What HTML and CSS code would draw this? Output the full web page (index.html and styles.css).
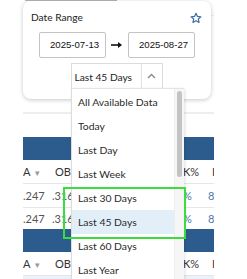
FILE: index.html
```html
<!DOCTYPE html>
<html lang="en">
<head>
  <meta charset="UTF-8" />
  <title>Date Range</title>
  <link rel="stylesheet" href="styles.css">
</head>
<body>
  <div class="page">
    <div class="tab-edge"></div>
    <div class="top-line"></div>
    <div class="divider"></div>

    <div class="group-bar"></div>
    <div class="row head">
      <span class="c1">A <i class="sort">&#9662;</i></span>
      <span class="c2">OBP</span>
      <span class="c3">K%</span>
      <span class="c4">I</span>
    </div>
    <div class="row">
      <span class="c1">.247</span>
      <span class="c2">.316</span>
      <span class="c3 link">%</span>
      <span class="c4 link">8</span>
    </div>
    <div class="row last">
      <span class="c1">.247</span>
      <span class="c2">.316</span>
      <span class="c3 link">%</span>
      <span class="c4 link">8</span>
    </div>

    <div class="group-bar"></div>
    <div class="row head">
      <span class="c1">A <i class="sort">&#9662;</i></span>
      <span class="c2">OBP</span>
      <span class="c3">K%</span>
      <span class="c4">I</span>
    </div>
    <div class="row tinted"></div>
  </div>

  <div class="popover">
    <div class="pop-head">
      <span>Date Range</span>
      <svg class="star" width="12" height="12" viewBox="0 0 24 24">
        <path d="M12 2.5l2.9 6.3 6.8.7-5.1 4.6 1.5 6.7L12 17.4l-6.1 3.4 1.5-6.7-5.1-4.6 6.8-.7z" fill="none" stroke="#3b6ea5" stroke-width="2.4" stroke-linejoin="round"/>
      </svg>
    </div>
    <div class="dates">
      <div class="date-input">2025-07-13</div>
      <svg class="arrow" width="12" height="8" viewBox="0 0 12 8">
        <path d="M0 4h10" stroke="#111" stroke-width="1.6"/>
        <path d="M7 1l4 3-4 3z" fill="#111"/>
      </svg>
      <div class="date-input">2025-08-27</div>
    </div>
    <div class="select">
      <span class="select-value">Last 45 Days</span>
      <span class="select-caret">
        <svg width="9" height="6" viewBox="0 0 9 6">
          <path d="M1 5l3.5-3.5L8 5" fill="none" stroke="#8a8a8a" stroke-width="1.4"/>
        </svg>
      </span>
    </div>
  </div>

  <div class="menu">
    <ul class="options">
      <li>All Available Data</li>
      <li>Today</li>
      <li>Last Day</li>
      <li>Last Week</li>
      <li>Last 30 Days</li>
      <li class="active">Last 45 Days</li>
      <li>Last 60 Days</li>
      <li>Last Year</li>
    </ul>
    <div class="track"><div class="thumb"></div></div>
  </div>

  <div class="highlight-box"></div>
</body>
</html>
```

FILE: styles.css
```css
body {
  margin: 0;
  width: 247px;
  height: 279px;
  overflow: hidden;
  background: #fff;
  font-family: Lato, "Open Sans", sans-serif;
  color: #333;
  position: relative;
}

/* background page */
.page {
  margin-left: 23px;
  width: 191px;
}

.tab-edge {
  width: 92px;
  height: 1px;
  margin-left: 2px;
  background: #b5b5b5;
}

.top-line {
  height: 1px;
  margin-top: 14px;
  background: #ececec;
}

.divider {
  height: 2px;
  margin-top: 96px;
  background: #eeeeee;
}

.group-bar {
  height: 23px;
  background: #2b5c8d;
}

.page .divider + .group-bar {
  margin-top: 23px;
}

.row {
  display: flex;
  align-items: center;
  height: 23px;
  border-bottom: 1px solid #e3e6ea;
  font-size: 11px;
  color: #555;
}

.row.last {
  height: 21px;
  border-bottom: none;
}

.row.head {
  color: #333;
}

.row.head .c2 {
  padding-left: 3px;
}

.row.head .c4 {
  padding-left: 4px;
}

.row.tinted {
  height: 4px;
  background: #eaf2fa;
  border-bottom: none;
}

.row span {
  box-sizing: border-box;
  white-space: nowrap;
  overflow: hidden;
}

.c1 { width: 29px; }
.c2 { width: 131px; }
.c3 { width: 25px; }
.c4 { width: 6px; }

.sort {
  font-style: normal;
  color: #999;
  font-size: 9px;
  margin-left: 2px;
}

.link {
  color: #4b78a8;
}

/* date range popover */
.popover {
  position: absolute;
  left: 23px;
  top: 1px;
  width: 188px;
  height: 98px;
  box-sizing: border-box;
  background: #fff;
  border-radius: 8px;
  box-shadow: 0 1px 4px rgba(0, 0, 0, 0.22);
  padding: 9px 9px 0 8px;
}

.pop-head {
  display: flex;
  justify-content: space-between;
  align-items: center;
  height: 14px;
  font-size: 10.2px;
  color: #222;
}

.star {
  margin-top: 1px;
}

.dates {
  display: flex;
  align-items: center;
  justify-content: center;
  gap: 3px;
  margin-top: 8px;
  padding-left: 1px;
}

.date-input {
  width: 67px;
  height: 26px;
  box-sizing: border-box;
  border: 1px solid #c4c4c4;
  border-radius: 2px;
  padding-left: 10px;
  font-family: "Liberation Sans", Arial, sans-serif;
  font-size: 9.6px;
  line-height: 24px;
  color: #111;
}

.arrow {
  margin: 0 2px;
}

.select {
  display: flex;
  width: 92px;
  height: 25px;
  box-sizing: border-box;
  margin: 5px auto 0;
  border: 1px solid #dcdcdc;
  border-bottom: none;
  font-size: 10.2px;
}

.select-value {
  flex: 1;
  padding-left: 3px;
  line-height: 27px;
  color: #222;
}

.select-caret {
  width: 20px;
  border-left: 1px solid #e2e2e2;
  display: flex;
  align-items: center;
  justify-content: center;
}

/* dropdown list */
.menu {
  position: absolute;
  left: 71px;
  top: 88px;
  width: 113px;
  height: 191px;
  box-sizing: border-box;
  display: flex;
  background: #fff;
  border-left: 1px solid #dcdcdc;
  border-top: 1px solid #e4e4e4;
  box-shadow: 1px 1px 3px rgba(0, 0, 0, 0.12);
}

.options {
  list-style: none;
  margin: 0;
  padding: 1px 0 0;
  flex: 1;
}

.options li {
  height: 24px;
  line-height: 24px;
  padding-left: 6px;
  font-size: 10.4px;
  color: #2a2a2a;
}

.options li.active {
  background: #e2eff9;
}

.track {
  width: 10px;
  background: #f6f6f6;
  border-left: 1px solid #ededed;
  box-sizing: border-box;
  padding: 2px 2px 0 2px;
}

.thumb {
  height: 86px;
  border-radius: 3px;
  background: #c3c3c3;
}

/* annotation */
.highlight-box {
  position: absolute;
  left: 63px;
  top: 187px;
  width: 123px;
  height: 52px;
  box-sizing: border-box;
  border: 2px solid #3ddc3d;
}
```
